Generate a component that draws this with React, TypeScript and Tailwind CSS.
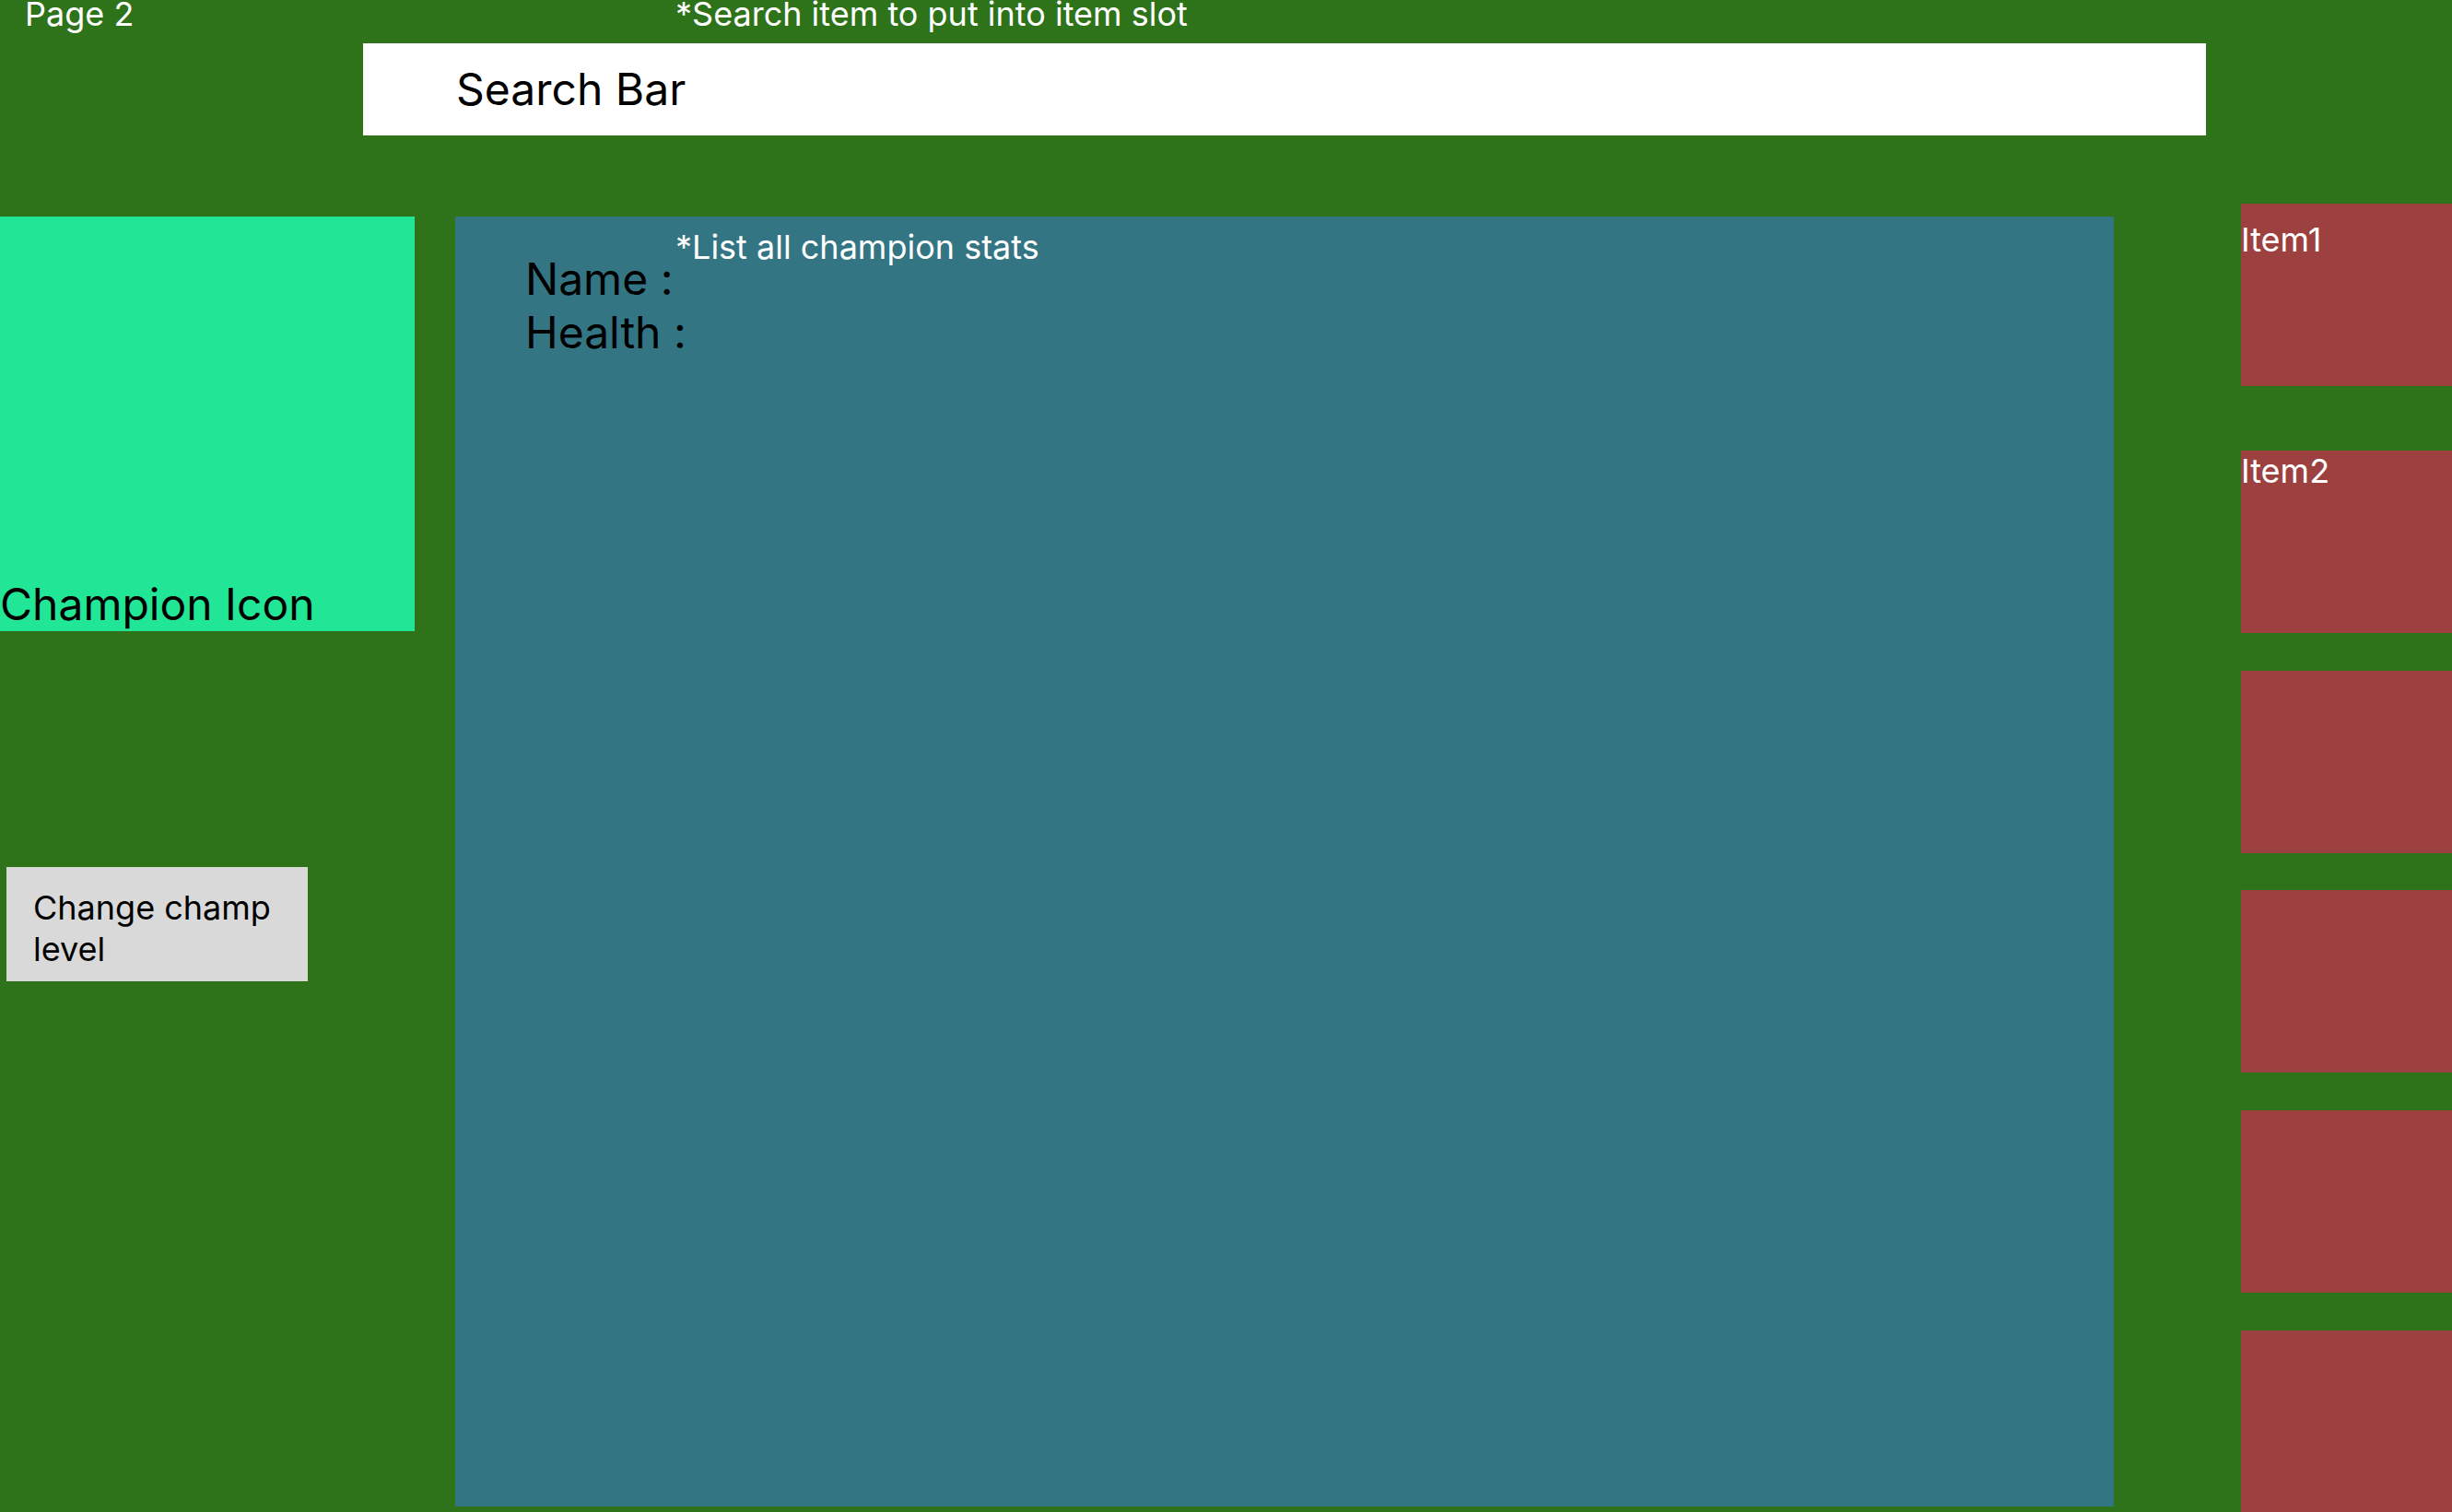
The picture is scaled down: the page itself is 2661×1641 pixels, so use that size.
export default function App() {

  const items = [
    { label: "Item1", className: "mt-0 pt-[17px]" },
    { label: "Item2", className: "mt-[70px] pt-0" },
    { label: "", className: "mt-[41px]" },
    { label: "", className: "mt-[40px]" },
    { label: "", className: "mt-[41px]" },
    { label: "", className: "mt-[41px]" },
  ];

  return (
    <div className="w-[2661px] h-[1641px] bg-[#2e7219] overflow-hidden font-['Inter',sans-serif]">

      {/* HEADER NOTES */}
      <div className="h-[47px] flex items-start text-white text-[36px] leading-[44px]">
        <div className="w-[733px] shrink-0 pl-[27px] -mt-[7px]">Page 2</div>
        <div className="-mt-[7px]">*Search item to put into item slot</div>
      </div>

      {/* SEARCH BAR */}
      <div className="ml-[394px] w-[2000px] h-[100px] bg-white flex items-center pl-[101px]">
        <span className="text-black text-[48px] leading-[58px]">Search Bar</span>
      </div>

      {/* BODY */}
      <div className="flex items-start mt-[88px]">

        {/* LEFT COLUMN */}
        <div className="w-[450px] shrink-0 flex flex-col">
          <div className="w-[450px] h-[450px] bg-[#20e696] flex items-end">
            <span className="text-black text-[48px] leading-[58px]">Champion Icon</span>
          </div>
          <div className="ml-[7px] mt-[256px] w-[327px] h-[124px] bg-[#d9d9d9] pl-[29px] pt-[22px] pr-[20px] text-black text-[36px] leading-[45px]">
            Change champ level
          </div>
        </div>

        {/* STATS PANEL */}
        <div className="ml-[44px] w-[1800px] h-[1400px] shrink-0 bg-[#337583]">
          <div className="ml-[239px] pt-[11px] text-white text-[36px] leading-[44px]">
            *List all champion stats
          </div>
          <div className="-mt-[16px] ml-[76px] text-black text-[48px] leading-[58px]">
            <div>Name :</div>
            <div>Health :</div>
          </div>
        </div>

        {/* ITEM SLOTS */}
        <div className="ml-[138px] -mt-[14px] shrink-0 flex flex-col">
          {items.map((item, index) => (
            <div
              key={index}
              className={`w-[260px] h-[198px] bg-[#9d4040] text-white text-[36px] leading-[44px] ${item.className}`}
            >
              {item.label}
            </div>
          ))}
        </div>

      </div>

    </div>
  );
}
